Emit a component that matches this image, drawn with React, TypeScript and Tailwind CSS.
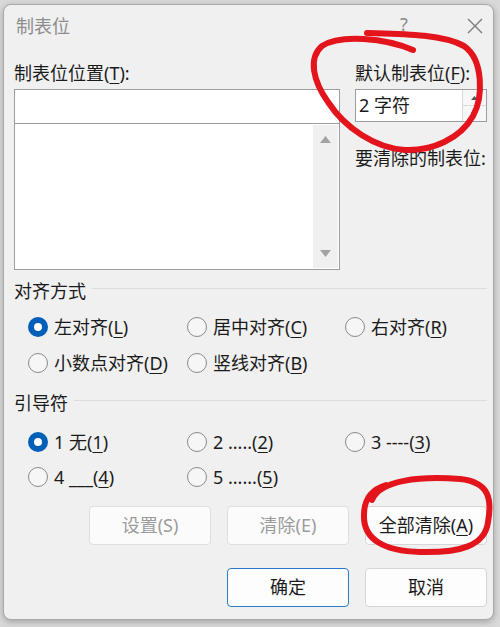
import React from "react";

const FONT = { fontFamily: '"Noto Sans", "Noto Sans CJK SC", sans-serif' };

// label with an underlined access key, e.g. 左对齐(L)
function Label({ text, hot, tail = ")" }: { text: string; hot: string; tail?: string }) {
  return (
    <span className="whitespace-pre">
      {text}(<span className="underline underline-offset-[3px] decoration-1">{hot}</span>
      {tail}
    </span>
  );
}

function Radio({ checked, children }: { checked?: boolean; children: React.ReactNode }) {
  return (
    <div className="flex items-center gap-[6px] h-[24px]">
      {checked ? (
        <span className="w-[20px] h-[20px] rounded-full bg-[#005fb8] flex items-center justify-center shrink-0">
          <span className="w-[8px] h-[8px] rounded-full bg-white" />
        </span>
      ) : (
        <span className="w-[20px] h-[20px] rounded-full border border-[#8a8a8a] bg-[#f6f6f6] shrink-0" />
      )}
      <span className="text-[18px] leading-[24px] text-[#1b1b1b]">{children}</span>
    </div>
  );
}

function GroupTitle({ children }: { children: React.ReactNode }) {
  return (
    <div className="flex items-center gap-[6px] h-[24px]">
      <span className="text-[18px] leading-[24px] text-[#1b1b1b] whitespace-nowrap">{children}</span>
      <div className="flex-1 h-px bg-[#dcdcdc] mb-[5px]" />
    </div>
  );
}

function Button({
  children,
  disabled,
  primary,
}: {
  children: React.ReactNode;
  disabled?: boolean;
  primary?: boolean;
}) {
  return (
    <div
      className={`w-[122px] h-[39px] rounded-[4px] border flex items-center justify-center text-[18px] ${
        primary
          ? "border-[#2b79c9] bg-[#fdfdfd] text-[#1b1b1b]"
          : disabled
          ? "border-[#dedede] bg-[#fbfbfb] text-[#9b9b9b]"
          : "border-[#d6d6d6] bg-[#fdfdfd] text-[#1b1b1b]"
      }`}
    >
      {children}
    </div>
  );
}

export default function App() {
  return (
    <div className="relative w-[500px] h-[627px] bg-[#d9d9d9] pt-[4px] pl-[3px] overflow-hidden" style={FONT}>
      <div className="w-[491px] h-[616px] rounded-[8px] border border-[#a9a9a9] bg-[#f0f0f0] flex flex-col pl-[10px] pr-[6px] shadow-[0_2px_6px_rgba(0,0,0,0.25)]">
        {/* Title bar */}
        <div className="h-[42px] flex items-center shrink-0 relative">
          <span className="text-[18px] text-[#8c8c8c] pl-[2px]">制表位</span>
          <span className="absolute left-[386px] top-[6px] text-[18px] text-[#8c8c8c]">?</span>
          <svg className="absolute left-[453px] top-[13px]" width="16" height="16" viewBox="0 0 16 16">
            <path d="M1 1 L15 15 M15 1 L1 15" stroke="#7a7a7a" strokeWidth="1.4" fill="none" />
          </svg>
        </div>

        {/* Tab stop position + default */}
        <div className="flex gap-[15px] mt-[14px]">
          <div className="w-[326px] flex flex-col">
            <div className="text-[18px] leading-[24px] text-[#1b1b1b]">
              <Label text="制表位位置" hot="T" tail="):" />
            </div>
            <div className="mt-[4px] h-[35px] bg-white border border-[#9d9d9d]" />
            <div className="h-[146px] bg-white border border-[#9d9d9d] border-t-0 flex justify-end p-px">
              <div className="w-[25px] bg-[#f0f0f0] flex flex-col items-center justify-between py-[11px]">
                <svg width="11" height="7" viewBox="0 0 11 7">
                  <path d="M5.5 0 L11 7 L0 7 Z" fill="#a3a3a3" />
                </svg>
                <svg width="11" height="7" viewBox="0 0 11 7">
                  <path d="M0 0 L11 0 L5.5 7 Z" fill="#a3a3a3" />
                </svg>
              </div>
            </div>
          </div>
          <div className="flex-1 flex flex-col">
            <div className="text-[18px] leading-[24px] text-[#1b1b1b]">
              <Label text="默认制表位" hot="F" tail="):" />
            </div>
            <div className="mt-[4px] h-[33px] bg-white border border-[#9d9d9d] flex items-center">
              <span className="flex-1 pl-[3px] text-[18px] text-[#1b1b1b]">2 字符</span>
              <div className="w-[24px] h-full flex flex-col border-l border-[#dadada]">
                <div className="flex-1 flex items-center justify-center border-b border-[#dadada] bg-[#f7f7f7]">
                  <svg width="7" height="4" viewBox="0 0 7 4">
                    <path d="M3.5 0 L7 4 L0 4 Z" fill="#555" />
                  </svg>
                </div>
                <div className="flex-1 flex items-center justify-center bg-[#f7f7f7]">
                  <svg width="7" height="4" viewBox="0 0 7 4">
                    <path d="M0 0 L7 0 L3.5 4 Z" fill="#555" />
                  </svg>
                </div>
              </div>
            </div>
            <div className="mt-[24px] text-[18px] leading-[24px] text-[#1b1b1b]">要清除的制表位:</div>
          </div>
        </div>

        {/* Alignment */}
        <div className="mt-[9px]">
          <GroupTitle>对齐方式</GroupTitle>
          <div className="grid grid-cols-[159px_158px_1fr] gap-y-[12px] pl-[14px] mt-[12px]">
            <Radio checked>
              <Label text="左对齐" hot="L" />
            </Radio>
            <Radio>
              <Label text="居中对齐" hot="C" />
            </Radio>
            <Radio>
              <Label text="右对齐" hot="R" />
            </Radio>
            <Radio>
              <Label text="小数点对齐" hot="D" />
            </Radio>
            <Radio>
              <Label text="竖线对齐" hot="B" />
            </Radio>
          </div>
        </div>

        {/* Leader */}
        <div className="mt-[16px]">
          <GroupTitle>引导符</GroupTitle>
          <div className="grid grid-cols-[159px_158px_1fr] gap-y-[11px] pl-[14px] mt-[15px]">
            <Radio checked>
              <Label text="1 无" hot="1" />
            </Radio>
            <Radio>
              <Label text="2 ....." hot="2" />
            </Radio>
            <Radio>
              <Label text="3 ----" hot="3" />
            </Radio>
            <Radio>
              <Label text="4 ___" hot="4" />
            </Radio>
            <Radio>
              <Label text="5 ......" hot="5" />
            </Radio>
          </div>
        </div>

        {/* Buttons */}
        <div className="flex justify-end gap-[16px] mt-[17px]">
          <Button disabled>设置(S)</Button>
          <Button disabled>清除(E)</Button>
          <Button>
            <Label text="全部清除" hot="A" />
          </Button>
        </div>
        <div className="flex justify-end gap-[16px] mt-[23px]">
          <Button primary>确定</Button>
          <Button>取消</Button>
        </div>
      </div>

      {/* red pen marks drawn over the dialog */}
      <svg className="absolute inset-0 pointer-events-none" width="500" height="627" viewBox="0 0 500 627">
        <path
          d="M367 33 C400 34, 442 34, 464 46 C484 60, 483 98, 473 116 C460 139, 432 151, 405 150 C375 148, 345 128, 328 102 C313 81, 308 58, 322 46 C340 34, 385 38, 413 50"
          stroke="#e3141c"
          strokeWidth="6"
          strokeLinecap="round"
          fill="none"
        />
        <path
          d="M372 500 C380 480, 420 476, 460 479 C490 482, 492 500, 488 522 C485 546, 460 553, 420 552 C385 551, 363 540, 364 515 C364 500, 370 490, 386 485"
          stroke="#e3141c"
          strokeWidth="6"
          strokeLinecap="round"
          fill="none"
        />
      </svg>
    </div>
  );
}
